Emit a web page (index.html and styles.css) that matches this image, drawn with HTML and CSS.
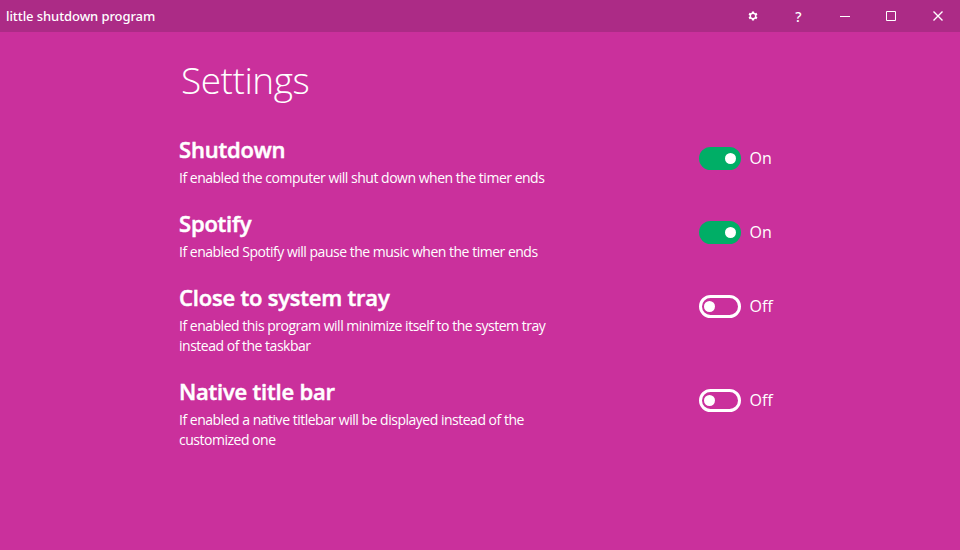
FILE: index.html
```html
<!DOCTYPE html>
<html lang="en">
<head>
<meta charset="utf-8">
<title>little shutdown program</title>
<link rel="stylesheet" href="styles.css">
</head>
<body>
<header class="titlebar">
  <span class="title">little shutdown program</span>
  <nav class="controls">
    <button class="ctl" aria-label="Settings"><svg width="10" height="10" viewBox="0 0 24 24"><path fill="#fff" fill-rule="evenodd" d="M9.500 1h5l.6 3.200 2 1.100 3-1.100 2.500 4.300-2.500 2.100v2.800l2.500 2.100-2.500 4.300-3-1.100-2 1.100-.6 3.200h-5l-.6-3.200-2-1.100-3 1.100-2.500-4.300 2.500-2.100v-2.800L1.400 8.500l2.500-4.300 3 1.100 2-1.100zM12 7.100a4.900 4.900 0 1 0 0 9.800 4.900 4.900 0 0 0 0-9.800z"/></svg></button>
    <button class="ctl help" aria-label="Help">?</button>
    <button class="ctl" aria-label="Minimize"><svg width="10" height="10" viewBox="0 0 10 10"><path fill="#fff" d="M0 5h10v1H0z"/></svg></button>
    <button class="ctl" aria-label="Maximize"><svg width="10" height="10" viewBox="0 0 10 10"><path fill="none" stroke="#fff" d="M.5.5h9v9h-9z"/></svg></button>
    <button class="ctl close" aria-label="Close"><svg width="10" height="10" viewBox="0 0 10 10"><path stroke="#fff" stroke-width="1.400" d="M.5.5l9 9M9.500.5l-9 9"/></svg></button>
  </nav>
</header>
<main class="settings">
  <h1>Settings</h1>
  <section class="row">
    <div class="text"><h2>Shutdown</h2><p>If enabled the computer will shut down when the timer ends</p></div>
    <div class="toggle on"><span class="switch"></span><span class="state">On</span></div>
  </section>
  <section class="row">
    <div class="text"><h2>Spotify</h2><p>If enabled Spotify will pause the music when the timer ends</p></div>
    <div class="toggle on"><span class="switch"></span><span class="state">On</span></div>
  </section>
  <section class="row">
    <div class="text"><h2>Close to system tray</h2><p>If enabled this program will minimize itself to the system tray instead of the taskbar</p></div>
    <div class="toggle"><span class="switch"></span><span class="state">Off</span></div>
  </section>
  <section class="row">
    <div class="text"><h2>Native title bar</h2><p>If enabled a native titlebar will be displayed instead of the customized one</p></div>
    <div class="toggle"><span class="switch"></span><span class="state">Off</span></div>
  </section>
</main>
</body>
</html>
```
FILE: styles.css
```css
* { box-sizing: border-box; }
body {
  margin: 0;
  height: 550px;
  overflow: hidden;
  background: #ca309c;
  color: #fff;
  font-family: "Open Sans", sans-serif;
}
.titlebar {
  display: flex;
  justify-content: space-between;
  height: 32px;
  background: #ac2b86;
}
.title { padding-left: 6px; font: 500 13px/32px "Noto Sans", sans-serif; letter-spacing: -.08px; }
.controls { display: flex; }
.ctl {
  display: flex;
  align-items: center;
  justify-content: center;
  width: 46px;
  height: 32px;
  padding: 0;
  border: 0;
  background: none;
  color: #fff;
}
.help { font: 500 14px "Noto Sans", sans-serif; padding-right: 1px; }
.close { padding-left: 1px; }
.settings { width: 602px; margin-left: 179px; }
h1 {
  margin: 0 0 21px 2px;
  padding-top: 20px;
  font-size: 37px;
  font-weight: 320;
  line-height: 55px;
  letter-spacing: -.47px;
}
.row { display: flex; justify-content: space-between; margin-bottom: 20px; }
.text { width: 380px; padding-top: 6px; margin-bottom: -6px; }
h2 {
  margin: 0;
  font-size: 22px;
  font-weight: 600;
  line-height: 30px;
  letter-spacing: -.2px;
  -webkit-text-stroke: .5px #fff;
}
p { margin: 0; padding-top: 4px; font-size: 14px; line-height: 20px; letter-spacing: -.49px; }
.toggle { display: flex; width: 82px; height: 24px; margin-top: 18px; align-items: center; }
.switch {
  display: flex;
  align-items: center;
  width: 42px;
  height: 23px;
  padding: 0 2px;
  border: 3px solid #fff;
  border-radius: 12px;
}
.switch::before { content: ""; width: 11px; height: 11px; border-radius: 50%; background: #fff; }
.on .switch { justify-content: flex-end; border-color: #00ae66; background: #00ae66; }
.state { margin-left: 8.5px; font-size: 16px; line-height: 24px; }
```
